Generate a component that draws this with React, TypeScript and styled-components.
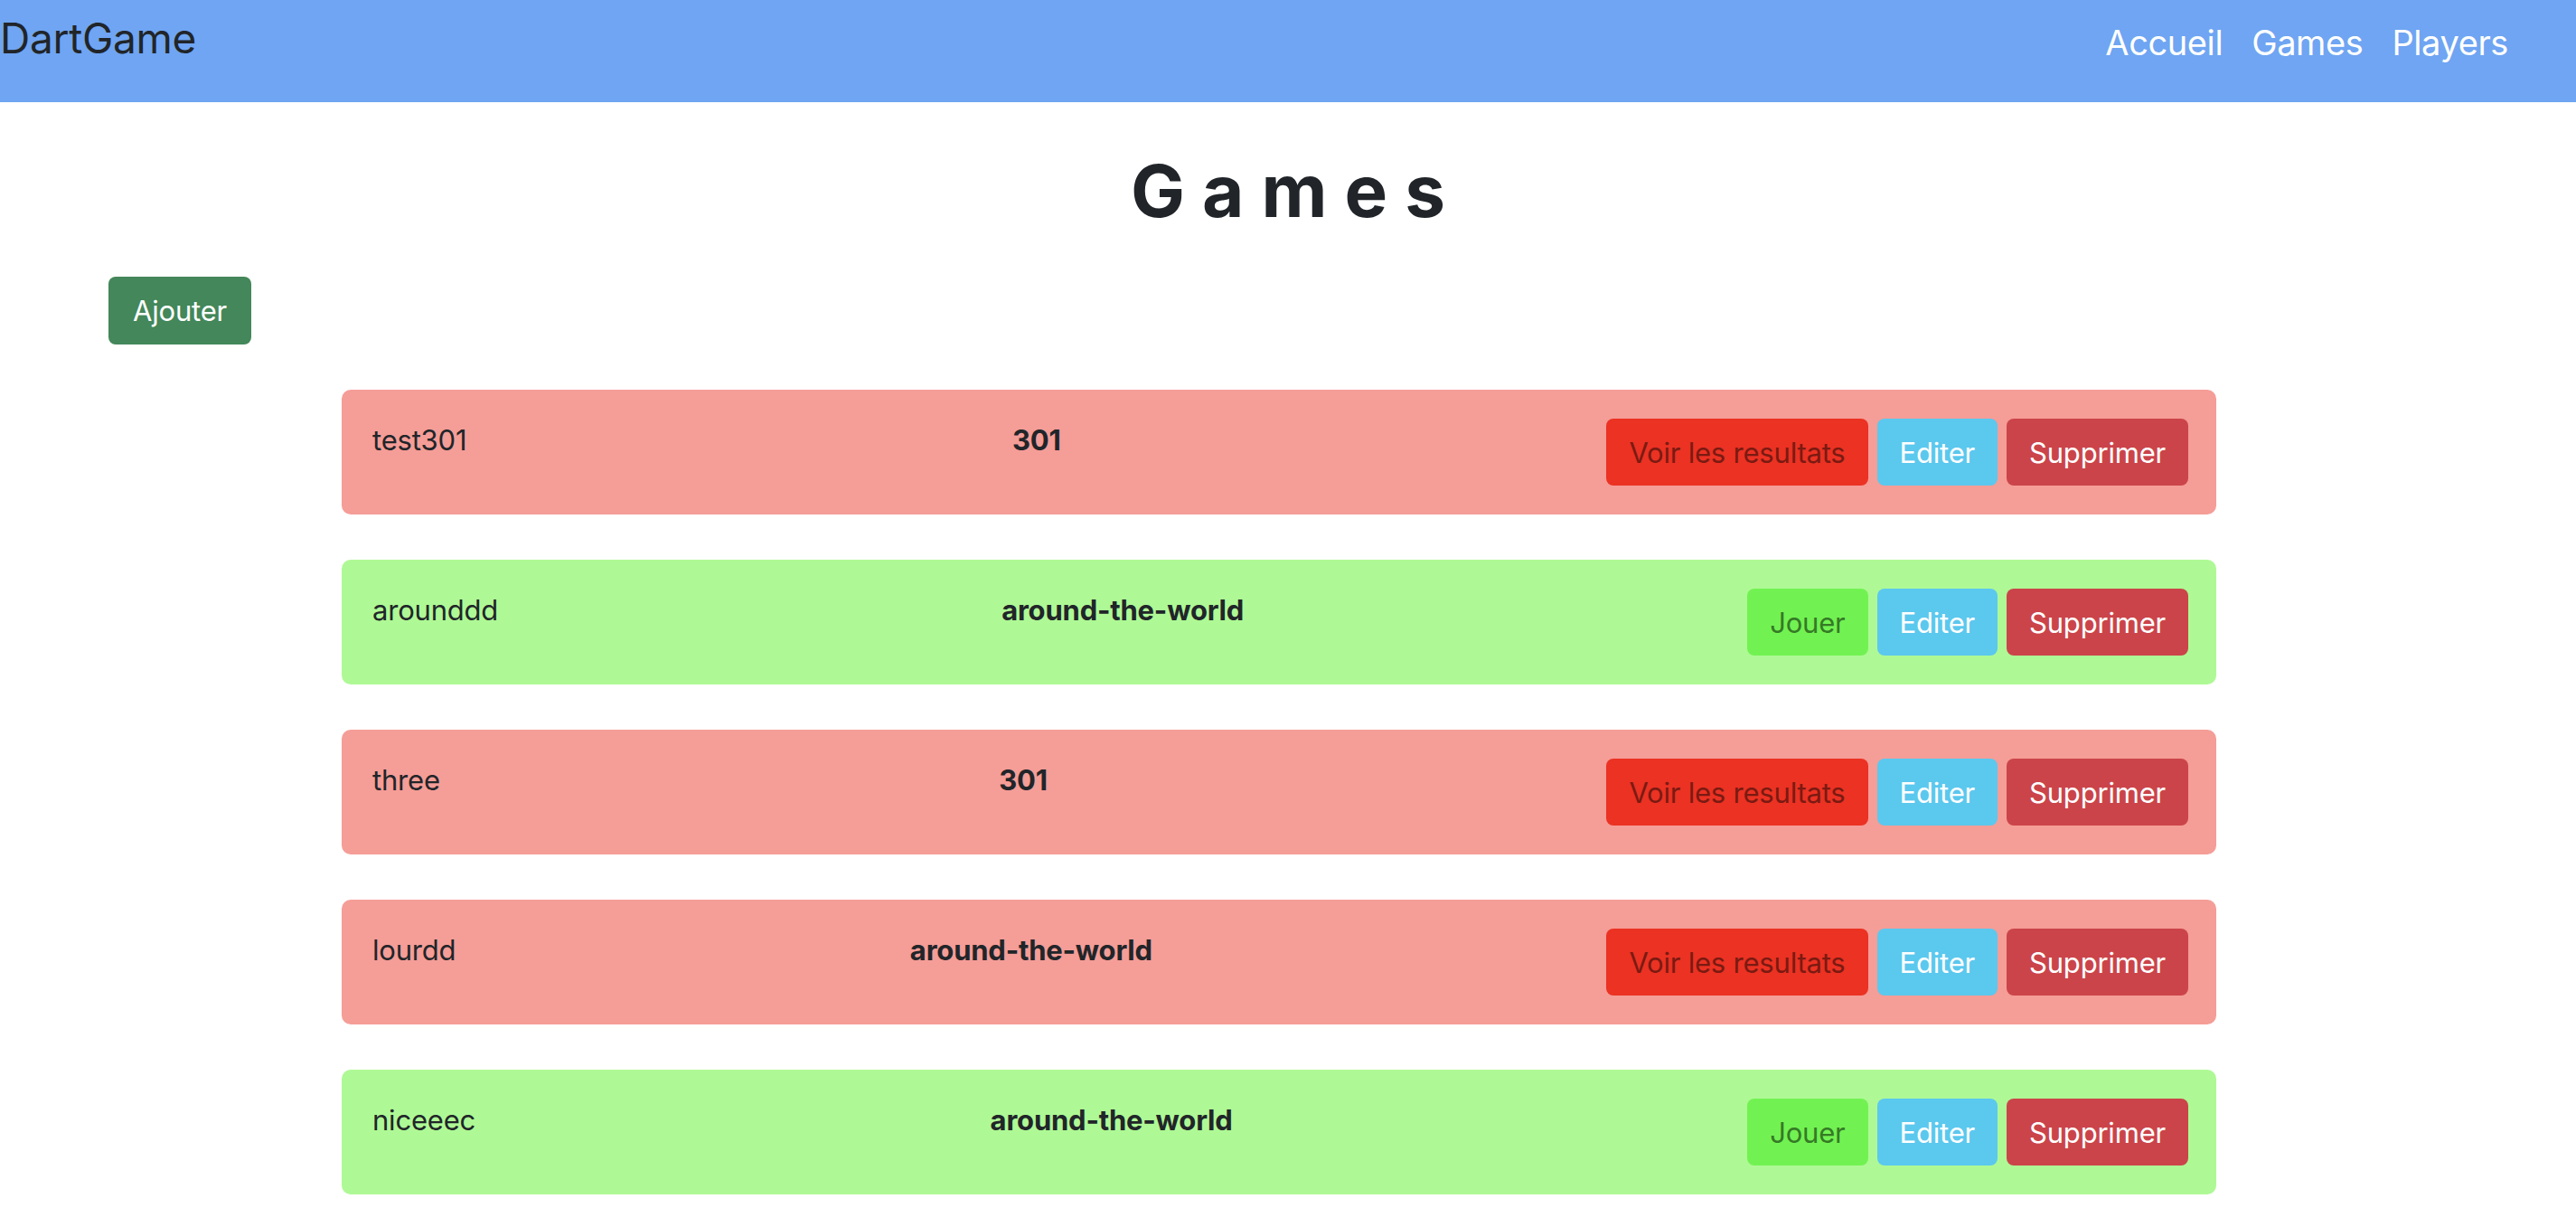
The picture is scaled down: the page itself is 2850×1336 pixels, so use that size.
import React from "react";
import styled, { createGlobalStyle } from "styled-components";

const GlobalStyle = createGlobalStyle`
  html, body {
    margin: 0;
    padding: 0;
    background: #ffffff;
    font-family: Inter, "Noto Sans", "Liberation Sans", sans-serif;
    color: #212529;
  }
  * { box-sizing: border-box; }
`;

const Navbar = styled.nav`
  height: 113px;
  background: #6fa5f2;
  display: flex;
  justify-content: space-between;
  align-items: flex-start;
  padding: 0 75px 0 0;
`;

const Brand = styled.a`
  font-size: 46px;
  line-height: 1.5;
  margin-top: 8px;
  color: #212529;
  text-decoration: none;
  letter-spacing: -0.3px;
`;

const NavLinks = styled.ul`
  list-style: none;
  margin: 19px 0 0;
  padding: 0;
  display: flex;
  gap: 32px;
`;

const NavLink = styled.a`
  font-size: 38px;
  line-height: 1.5;
  color: #ffffff;
  text-decoration: none;
  letter-spacing: -0.4px;
`;

const Title = styled.h1`
  margin: 50px 0 47px;
  text-align: center;
  font-size: 80px;
  line-height: 1.2;
  font-weight: 700;
  letter-spacing: 19px;
  padding-left: 19px;
  color: #212529;
`;

const Toolbar = styled.div`
  padding-left: 120px;
  margin-bottom: 50px;
`;

const Button = styled.button<{ $bg: string; $fg: string }>`
  height: 74px;
  padding: 0 25px;
  border: none;
  border-radius: 8px;
  background: ${(p) => p.$bg};
  color: ${(p) => p.$fg};
  font-family: Inter, "Noto Sans", "Liberation Sans", sans-serif;
  font-size: 31px;
  line-height: 1;
  letter-spacing: -0.2px;
  cursor: pointer;
  white-space: nowrap;
`;

const AddButton = styled(Button)`
  height: 75px;
  padding: 0 27px;
`;

const List = styled.div`
  display: flex;
  flex-direction: column;
  gap: 50px;
  margin-left: 378px;
  width: 2074px;
`;

const Row = styled.div<{ $done: boolean }>`
  display: flex;
  justify-content: space-between;
  align-items: flex-start;
  padding: 32px 31px 32px 34px;
  border-radius: 10px;
  background: ${(p) => (p.$done ? "#f59d97" : "#aef995")};
`;

const Name = styled.span`
  font-size: 31px;
  line-height: 48px;
  letter-spacing: -0.2px;
`;

const Kind = styled.span`
  font-size: 31px;
  line-height: 48px;
  font-weight: 700;
  letter-spacing: -0.2px;
`;

const Actions = styled.div`
  display: flex;
  gap: 10px;
`;

const games = [
  { name: "test301", type: "301", done: true },
  { name: "arounddd", type: "around-the-world", done: false },
  { name: "three", type: "301", done: true },
  { name: "lourdd", type: "around-the-world", done: true },
  { name: "niceeec", type: "around-the-world", done: false },
];

export default function App() {
  return (
    <>
      <GlobalStyle />
      <Navbar>
        <Brand href="#">DartGame</Brand>
        <NavLinks>
          <li><NavLink href="#">Accueil</NavLink></li>
          <li><NavLink href="#">Games</NavLink></li>
          <li><NavLink href="#">Players</NavLink></li>
        </NavLinks>
      </Navbar>
      <Title>Games</Title>
      <Toolbar>
        <AddButton $bg="#43875a" $fg="#ffffff">Ajouter</AddButton>
      </Toolbar>
      <List>
        {games.map((g) => (
          <Row key={g.name} $done={g.done}>
            <Name>{g.name}</Name>
            <Kind>{g.type}</Kind>
            <Actions>
              {g.done ? (
                <Button $bg="#eb3223" $fg="#7a1a12">Voir les resultats</Button>
              ) : (
                <Button $bg="#72f252" $fg="#357a26">Jouer</Button>
              )}
              <Button $bg="#5bc8ee" $fg="#ffffff">Editer</Button>
              <Button $bg="#cb444a" $fg="#ffffff">Supprimer</Button>
            </Actions>
          </Row>
        ))}
      </List>
    </>
  );
}
